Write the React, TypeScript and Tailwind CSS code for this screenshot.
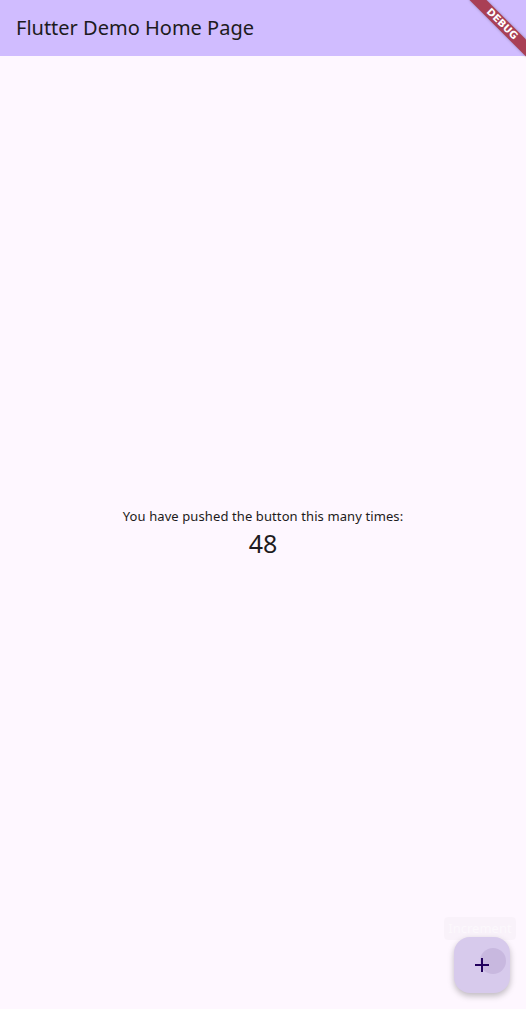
export default function App() {
  return (
    <div
      className="relative flex h-[1009px] w-[526px] flex-col overflow-hidden bg-[#fef7ff] text-[#1d1b20]"
      style={{ fontFamily: '"Noto Sans", "Open Sans", sans-serif' }}
    >
      {/* App bar */}
      <header className="flex h-[56px] shrink-0 items-center bg-[#d0bcff] px-4">
        <h1 className="text-[20px] font-normal leading-none tracking-[0px]">Flutter Demo Home Page</h1>
      </header>

      {/* Body */}
      <main className="flex flex-1 flex-col items-center justify-center">
        <p className="text-[13px] leading-[20px] tracking-[0.1px]">You have pushed the button this many times:</p>
        <p className="text-[25px] leading-[34px]">48</p>
      </main>

      {/* Tooltip, fading in */}
      <div className="absolute right-[10px] bottom-[69px] flex h-[23px] w-[72px] items-center justify-center rounded bg-black/[0.02]">
        <span className="text-[13px] text-white/50">Increment</span>
      </div>

      {/* FAB */}
      <button className="absolute right-4 bottom-4 flex h-14 w-14 items-center justify-center overflow-hidden rounded-2xl bg-[#d7caec] shadow-[0_3px_6px_rgba(0,0,0,0.25)]">
        <span className="absolute left-[26px] top-[11px] h-[26px] w-[26px] rounded-full bg-[#c8b8df]" />
        <svg className="relative" width="24" height="24" viewBox="0 0 24 24" fill="#21005d">
          <path d="M19 13h-6v6h-2v-6H5v-2h6V5h2v6h6v2z" />
        </svg>
      </button>

      {/* Debug banner */}
      <div className="absolute right-[-16px] top-[18px] flex h-[12px] w-[80px] rotate-45 items-center justify-center bg-[#a93f55] shadow-[0_0_3px_rgba(0,0,0,0.3)]">
        <span className="text-[10px] font-black leading-none tracking-[0px] text-white" style={{ fontFamily: '"DejaVu Sans", sans-serif' }}>
          DEBUG
        </span>
      </div>
    </div>
  );
}
